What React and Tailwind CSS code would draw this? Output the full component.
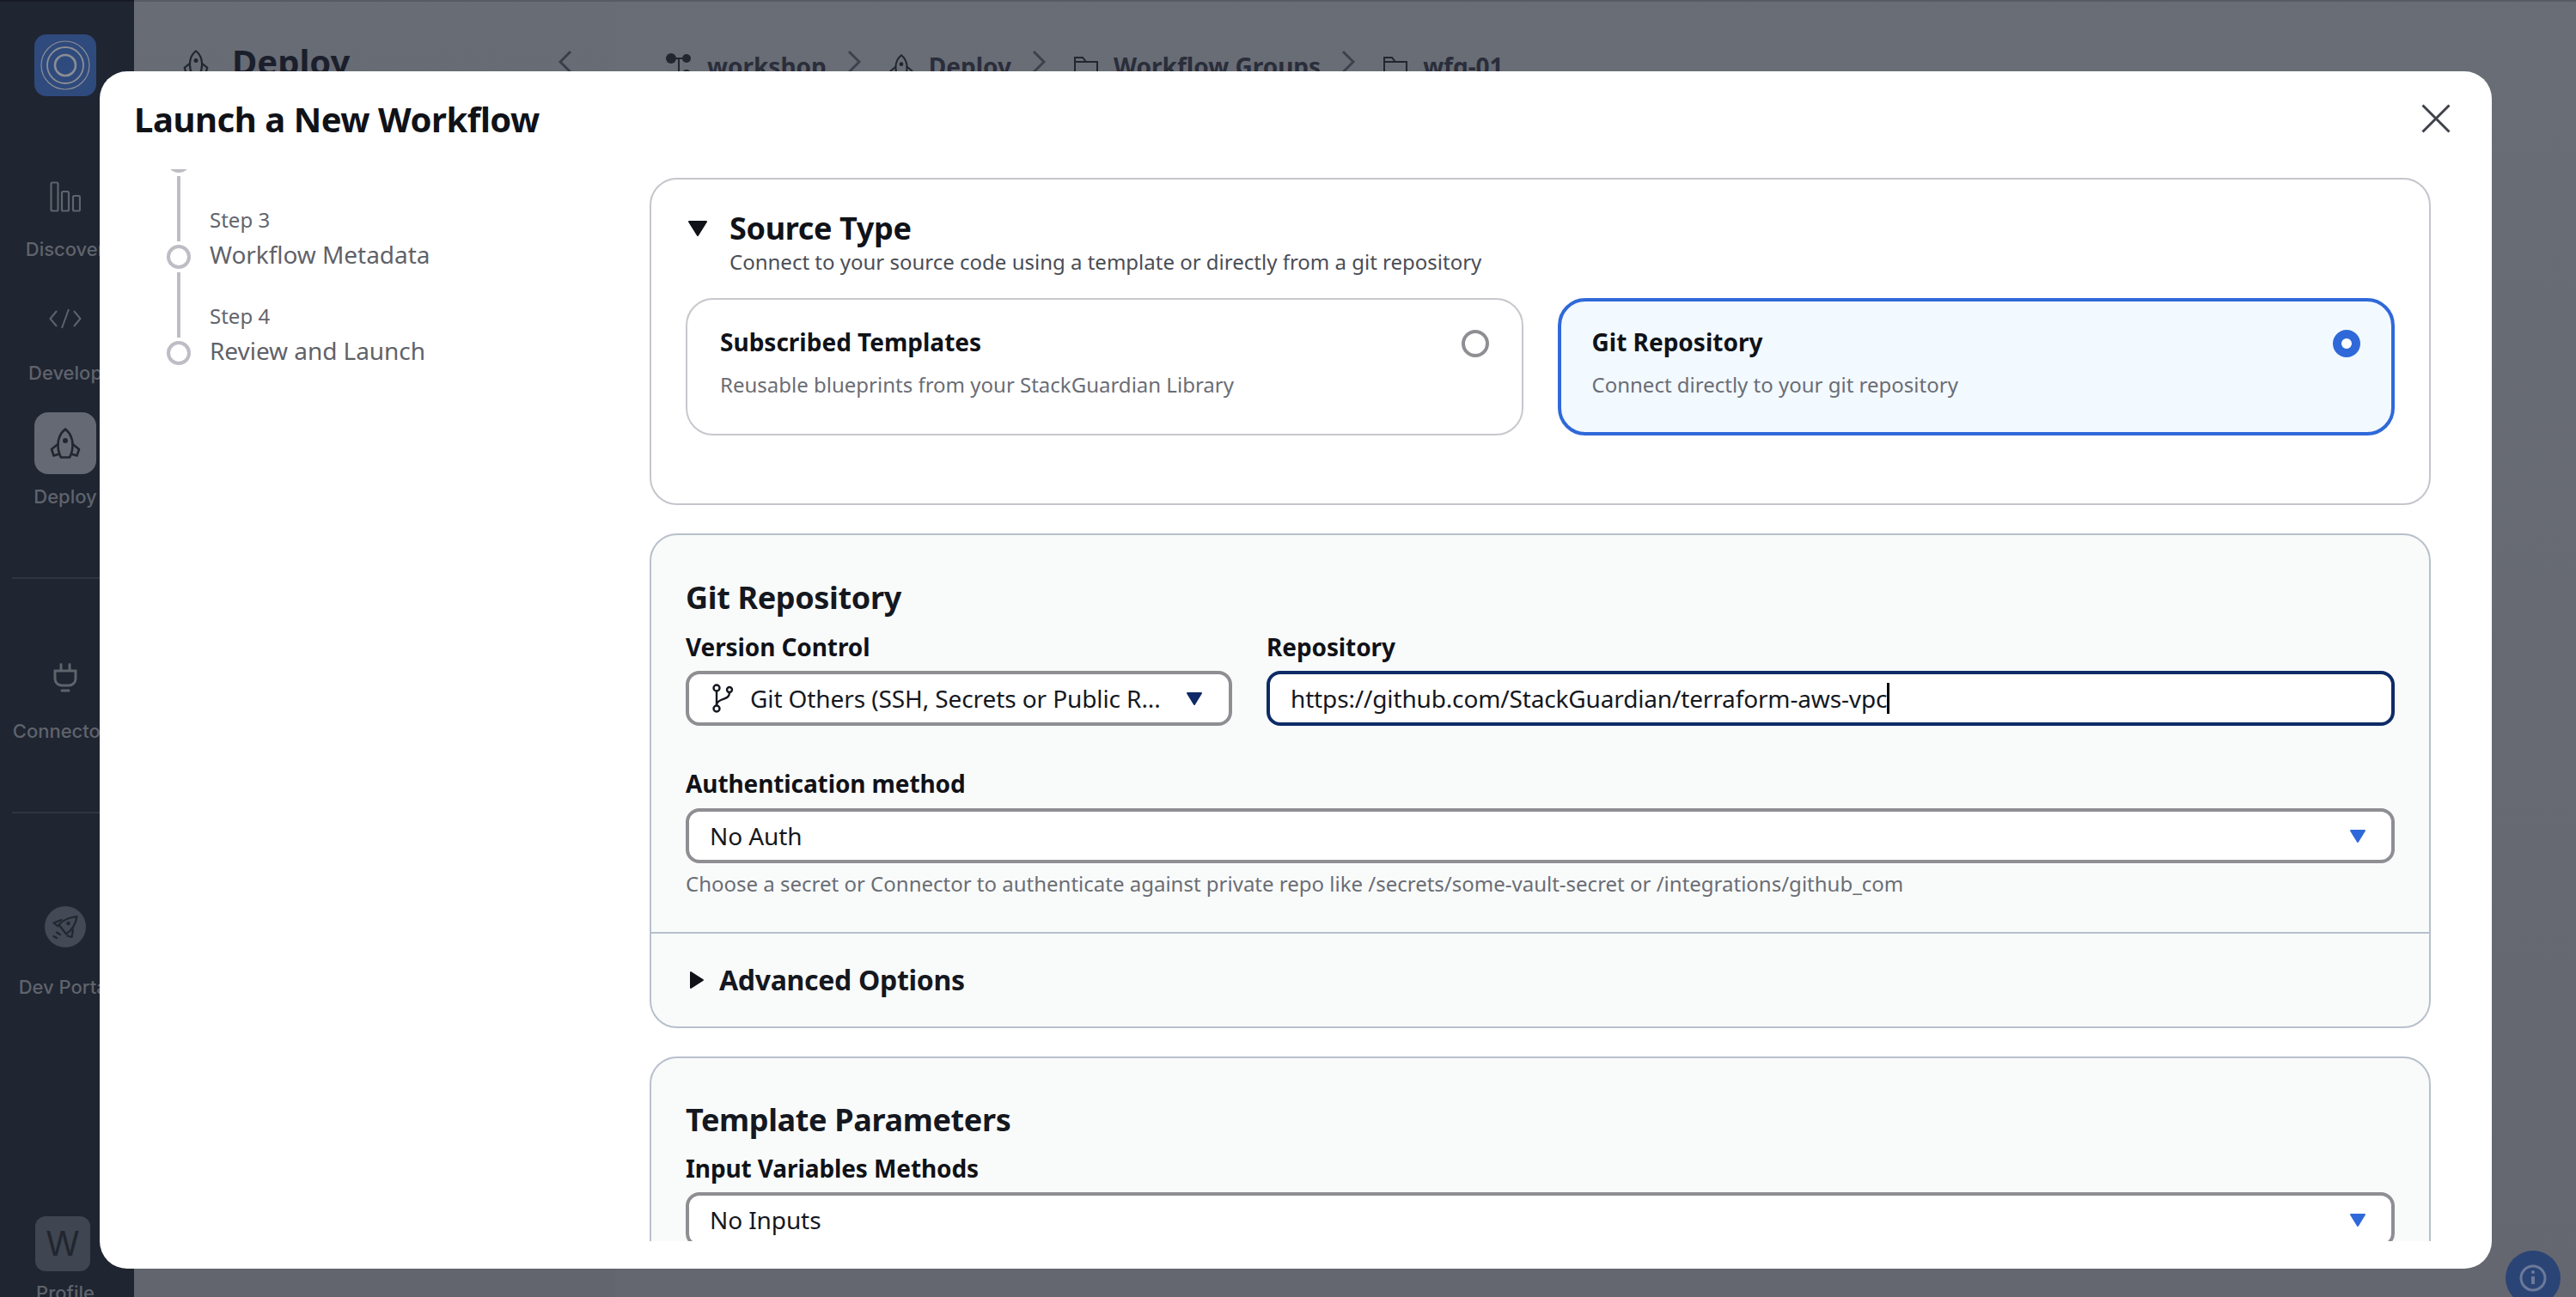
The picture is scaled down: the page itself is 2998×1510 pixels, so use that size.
import React from "react";

const Rocket = ({ className, stroke = "#22262f" }) => (
  <svg viewBox="0 0 36 36" className={className} fill="none" stroke={stroke} strokeWidth="2.600" strokeLinejoin="round" strokeLinecap="round">
    <path d="M18 1.500C12.500 6 9.500 12 9.500 20c0 6 1.500 11 3.500 14.500h10c2-3.500 3.500-8.500 3.500-14.500 0-8-3-14-8.500-18.500z" />
    <circle cx="18" cy="15" r="3" fill={stroke} stroke="none" />
    <path d="M9.500 19 2 25l2.500 7.500 6.500-2M26.500 19l7.500 6-2.500 7.500-6.500-2" />
  </svg>
);

const SideLabel = ({ children, className = "" }) => (
  <div className={`text-[22px] leading-[28px] font-medium text-[#5f636c] whitespace-nowrap font-['Inter',sans-serif] ${className}`}>{children}</div>
);

const Sidebar = () => (
  <div className="w-[156px] shrink-0 h-full bg-[#1f2531] border-t-2 border-[#171a24] flex flex-col items-center pt-[38px] pr-[4px] relative overflow-hidden">
    <div className="w-[72px] h-[72px] shrink-0 rounded-[14px] bg-[#2f4a7d] flex items-center justify-center">
      <svg viewBox="0 0 64 64" className="w-[64px] h-[64px]" fill="none" stroke="#8b8e93" strokeWidth="1.600">
        <circle cx="32" cy="32" r="28" strokeWidth="1.200" />
        <circle cx="32" cy="32" r="21" strokeWidth="1.800" />
        <circle cx="32" cy="32" r="12" strokeWidth="2.600" />
      </svg>
    </div>
    <svg viewBox="0 0 36 36" className="w-[36px] h-[36px] mt-[99px] shrink-0" fill="none" stroke="#5f636c" strokeWidth="2.200">
      <rect x="1.500" y="1.500" width="8" height="33" rx="1.500" />
      <rect x="14" y="12" width="8" height="22.500" rx="1.500" />
      <rect x="27" y="17" width="8" height="17.500" rx="1.500" />
    </svg>
    <SideLabel className="mt-[29px]">Discover</SideLabel>
    <svg viewBox="0 0 38 24" className="w-[38px] h-[24px] mt-[55px] shrink-0" fill="none" stroke="#5f636c" strokeWidth="2">
      <path d="M9 3 1.500 12 9 21M29 3l7.500 9L29 21M23 1l-8 22" />
    </svg>
    <SideLabel className="mt-[37px]">Develop</SideLabel>
    <div className="w-[72px] h-[72px] shrink-0 mt-[32px] rounded-[16px] bg-[#656973] flex items-center justify-center">
      <Rocket className="w-[36px] h-[36px]" stroke="#22262f" />
    </div>
    <SideLabel className="mt-[12px]">Deploy</SideLabel>
    <div className="h-[2px] w-[124px] bg-[#2f3541] mt-[80px] shrink-0" />
    <svg viewBox="0 0 28 34" className="w-[28px] h-[34px] mt-[98px] shrink-0" fill="none" stroke="#5f636c" strokeWidth="3" strokeLinecap="round">
      <path d="M9 1.500V8M19 1.500V8M2 9h24v9c0 5-4 8-8 8h-8c-4 0-8-3-8-8zM10 32h8" />
    </svg>
    <SideLabel className="mt-[31px]">Connectors</SideLabel>
    <div className="h-[2px] w-[124px] bg-[#2f3541] mt-[80px] shrink-0" />
    <div className="w-[48px] h-[48px] rounded-full bg-[#434955] mt-[108px] shrink-0">
      <svg viewBox="0 0 48 48" className="w-[48px] h-[48px]" fill="none" stroke="#22262f" strokeWidth="2.200" strokeLinejoin="round" strokeLinecap="round">
        <path d="M37.500 12c-9 1-16 4-21 9.500l8.500 11c6-4 11-11 12.500-20.500z" />
        <path d="M19.500 16l-9 3.500 5 4M33 27.500 31.500 36l-5-1.500M10.500 35l3.500 2M14 30.500l4 2.500" />
        <circle cx="27.500" cy="20" r="2.200" fill="#22262f" stroke="none" />
      </svg>
    </div>
    <SideLabel className="mt-[32px]">Dev Portal</SideLabel>
    <div className="w-[64px] h-[64px] shrink-0 rounded-[12px] bg-[#3f4551] mt-[253px] -ml-[6px] flex items-center justify-center text-[40px] text-[#22262f] font-['Inter',sans-serif]">W</div>
    <SideLabel className="mt-[11px]">Profile</SideLabel>
  </div>
);

const Crumb = ({ icon, children }) => (
  <div className="flex items-center gap-[18px]">
    {icon}
    <span className="text-[28px] leading-[38px] font-bold text-[#2a2e3a] whitespace-nowrap">{children}</span>
  </div>
);

const CrumbChevron = () => (
  <svg viewBox="0 0 16 28" className="w-[16px] h-[28px] ml-[24px] mr-[33px] shrink-0" fill="none" stroke="#3d414c" strokeWidth="3">
    <path d="M2 2l12 12L2 26" />
  </svg>
);

const FolderA = () => (
  <svg viewBox="0 0 28 26" className="w-[28px] h-[26px] shrink-0" fill="none" stroke="#22262f" strokeWidth="2">
    <path d="M1 25V3h9l4 5h13v17zM1 8h13" />
  </svg>
);

const Background = () => (
  <div className="absolute inset-0 flex font-['Noto_Sans',sans-serif]">
    <Sidebar />
    <div className="w-[560px] shrink-0 h-full bg-linear-to-b from-[#686c75] to-[#62656d] border-t-2 border-[#575b66] flex items-start pl-[57px] pr-[50px] pt-[44px]">
      <Rocket className="w-[30px] h-[30px] mt-[12px] shrink-0" stroke="#22262f" />
      <span className="ml-[27px] text-[40px] leading-[52px] font-bold text-[#1b1f2c]">Deploy</span>
      <svg viewBox="0 0 16 28" className="ml-auto w-[16px] h-[28px] mt-[12px]" fill="none" stroke="#3a3e49" strokeWidth="3">
        <path d="M14 2 2 14l12 12" />
      </svg>
    </div>
    <div className="flex-1 h-full bg-linear-to-b from-[#696d76] to-[#64676f] border-t-2 border-[#575b66] pl-[59px] pt-[56px] flex items-start relative">
      <Crumb icon={
        <svg viewBox="0 0 30 30" className="w-[30px] h-[30px] shrink-0" fill="#22262f">
          <circle cx="6" cy="6" r="6" /><circle cx="24" cy="6" r="5" /><circle cx="24" cy="24" r="5" />
          <path d="M6 5h18v2H16v16h8v2H14V7H6z" />
        </svg>}>workshop</Crumb>
      <CrumbChevron />
      <Crumb icon={<Rocket className="w-[28px] h-[28px] shrink-0" />}>Deploy</Crumb>
      <CrumbChevron />
      <Crumb icon={<FolderA />}>Workflow Groups</Crumb>
      <CrumbChevron />
      <Crumb icon={<FolderA />}>wfg-01</Crumb>
      <div className="absolute left-[2200px] top-[1454px] w-[64px] h-[64px] rounded-full bg-[#2b4476] flex items-center justify-center">
        <svg viewBox="0 0 32 32" className="w-[32px] h-[32px]" fill="none" stroke="#6b7a99" strokeWidth="3">
          <circle cx="16" cy="16" r="14" />
          <path d="M16 14v9" strokeWidth="4" />
          <circle cx="16" cy="9" r="2" fill="#6b7a99" stroke="none" />
        </svg>
      </div>
    </div>
  </div>
);

const Step = ({ n, title }) => (
  <div className="flex h-[112px]">
    <div className="w-[28px] shrink-0 flex flex-col items-center">
      <div className="w-[4px] h-[76px] mt-[4px] bg-[#bdbdc6]" />
      <div className="w-[28px] h-[28px] mt-[4px] rounded-full border-4 border-[#bdbdc6] shrink-0" />
    </div>
    <div className="ml-[22px] pt-[39px]">
      <div className="text-[24px] leading-[32px] text-[#62656d]">Step {n}</div>
      <div className="text-[28px] leading-[40px] tracking-[-0.05px] text-[#5f6269] whitespace-nowrap mt-[4px]">{title}</div>
    </div>
  </div>
);

const Stepper = () => (
  <div className="w-[598px] shrink-0 pl-[36px] h-full overflow-hidden">
    <div className="w-[28px] h-[28px] -mt-[24px] rounded-full border-4 border-[#bdbdc6]" />
    <Step n={3} title="Workflow Metadata" />
    <Step n={4} title="Review and Launch" />
  </div>
);

const Tile = ({ title, sub, selected }) => (
  <div className={`flex-1 h-[160px] rounded-[32px] flex items-start justify-between ${selected ? "border-4 border-[#2f69d9] bg-[#f2f9ff] pl-[36px] pr-[36px] pt-[28px]" : "border-2 border-[#c7c7cd] bg-white pl-[38px] pr-[38px] pt-[30px]"}`}>
    <div>
      <div className="text-[28px] leading-[38px] font-bold text-[#101218]">{title}</div>
      <div className="text-[24px] leading-[32px] text-[#6a6d75] mt-[15px]">{sub}</div>
    </div>
    {selected ? (
      <div className="w-[32px] h-[32px] mt-[5px] rounded-full border-[10px] border-[#2f69d9] bg-white" />
    ) : (
      <div className="w-[32px] h-[32px] mt-[5px] rounded-full border-4 border-[#8e8e93] bg-white" />
    )}
  </div>
);

const Caret = ({ className, fill }) => (
  <svg viewBox="0 0 20 17" className={className} fill={fill} stroke={fill} strokeWidth="2" strokeLinejoin="round">
    <path d="M2 2h16l-8 13z" />
  </svg>
);

const Label = ({ children, className = "" }) => (
  <div className={`text-[28px] leading-[38px] font-bold tracking-[-0.1px] text-[#101218] ${className}`}>{children}</div>
);

const CardTitle = ({ children }) => (
  <div className="text-[36px] leading-[48px] font-bold tracking-[-0.35px] text-[#15181f]">{children}</div>
);

const Select = ({ children, className = "" }) => (
  <div className={`h-[64px] shrink-0 rounded-[16px] border-4 border-[#8e8e93] bg-white flex items-center pl-[24px] pr-[29px] justify-between text-[28px] tracking-[-0.1px] text-[#15181f] ${className}`}>
    <span>{children}</span>
    <Caret className="w-[20px] h-[17px]" fill="#2f69d9" />
  </div>
);

const Content = () => (
  <div className="flex-1 h-full overflow-hidden pt-[10px] flex flex-col gap-[33px]">
    <div className="h-[381px] shrink-0 rounded-[32px] border-2 border-[#c5c5cc] bg-white px-[40px] pt-[33px]">
      <div className="flex items-start">
        <svg viewBox="0 0 24 20" className="w-[24px] h-[20px] mt-[14px] ml-[2px] shrink-0" fill="#101218" stroke="#101218" strokeWidth="2" strokeLinejoin="round">
          <path d="M2 2h20L12 18z" />
        </svg>
        <div className="ml-[25px]">
          <div className="text-[36px] leading-[48px] font-bold tracking-[-0.35px] text-[#101218]">Source Type</div>
          <div className="text-[24px] leading-[34px] text-[#4a4d55] -mt-[2px]">Connect to your source code using a template or directly from a git repository</div>
        </div>
      </div>
      <div className="flex gap-[40px] mt-[25px]">
        <Tile title="Subscribed Templates" sub="Reusable blueprints from your StackGuardian Library" />
        <Tile selected title="Git Repository" sub="Connect directly to your git repository" />
      </div>
    </div>

    <div className="h-[576px] shrink-0 rounded-[32px] border-2 border-[#b8c0cc] bg-[#f9fbfa] flex flex-col">
      <div className="px-[40px] pt-[49px] h-[462px] shrink-0">
        <CardTitle>Git Repository</CardTitle>
        <div className="flex gap-[40px] mt-[14px]">
          <div className="w-[636px] shrink-0">
            <Label>Version Control</Label>
            <div className="h-[64px] mt-[9px] rounded-[16px] border-4 border-[#8e8e93] bg-white flex items-center pl-[26px] text-[28px] tracking-[-0.1px] text-[#15181f]">
              <svg viewBox="0 0 26 34" className="w-[26px] h-[34px] shrink-0" fill="none" stroke="#15181f" strokeWidth="2.400">
                <circle cx="6" cy="5" r="3.500" /><circle cx="6" cy="29" r="3.500" /><circle cx="21" cy="7" r="3" />
                <path d="M6 8.500v17M21 10c0 7-6 7-10 9-3 1.500-5 3-5 6" />
              </svg>
              <span className="ml-[19px] whitespace-nowrap">Git Others (SSH, Secrets or Public R...</span>
              <Caret className="w-[20px] h-[17px] ml-[29px] shrink-0" fill="#0f2a66" />
            </div>
          </div>
          <div className="flex-1">
            <Label>Repository</Label>
            <div className="h-[64px] mt-[9px] rounded-[16px] border-4 border-[#0d2b66] bg-white flex items-center pl-[24px] text-[28px] tracking-[-0.15px] text-[#15181f]">
              <span className="whitespace-nowrap">https://github.com/StackGuardian/terraform-aws-vpc</span>
              <span className="w-[3px] h-[36px] bg-black shrink-0" />
            </div>
          </div>
        </div>
        <Label className="mt-[48px]">Authentication method</Label>
        <Select className="mt-[10px]">No Auth</Select>
        <div className="text-[24px] leading-[34px] text-[#6a6d75] mt-[7px]">Choose a secret or Connector to authenticate against private repo like /secrets/some-vault-secret or /integrations/github_com</div>
      </div>
      <div className="border-t-2 border-[#b8c0cc] flex-1 flex items-center pl-[44px]">
        <svg viewBox="0 0 18 22" className="w-[18px] h-[22px] shrink-0" fill="#101218" stroke="#101218" strokeWidth="2" strokeLinejoin="round">
          <path d="M2 2v18l14-9z" />
        </svg>
        <span className="ml-[17px] text-[32px] leading-[42px] font-bold tracking-[-0.3px] text-[#15181f]">Advanced Options</span>
      </div>
    </div>

    <div className="h-[300px] shrink-0 rounded-[32px] border-2 border-[#b8c0cc] bg-[#f9fbfa] px-[40px] pt-[48px]">
      <CardTitle>Template Parameters</CardTitle>
      <Label className="mt-[13px]">Input Variables Methods</Label>
      <Select className="mt-[9px]">No Inputs</Select>
    </div>
  </div>
);

const Modal = () => (
  <div className="absolute left-[116px] top-[83px] w-[2784px] h-[1394px] rounded-[32px] bg-white flex flex-col font-['Noto_Sans',sans-serif]">
    <div className="h-[114px] shrink-0 flex items-start justify-between pl-[40px] pr-[48px]">
      <div className="mt-[28px] text-[40px] leading-[56px] font-bold tracking-[-0.45px] text-[#101218]">Launch a New Workflow</div>
      <svg viewBox="0 0 34 34" className="w-[34px] h-[34px] mt-[38px]" fill="none" stroke="#3f424b" strokeWidth="3">
        <path d="M1.500 1.500l31 31M32.500 1.500l-31 31" />
      </svg>
    </div>
    <div className="h-[1248px] shrink-0 flex pl-[42px] pr-[71px]">
      <Stepper />
      <Content />
    </div>
  </div>
);

export default function App() {
  return (
    <div className="relative w-[2998px] h-[1510px] overflow-hidden">
      <Background />
      <Modal />
    </div>
  );
}
